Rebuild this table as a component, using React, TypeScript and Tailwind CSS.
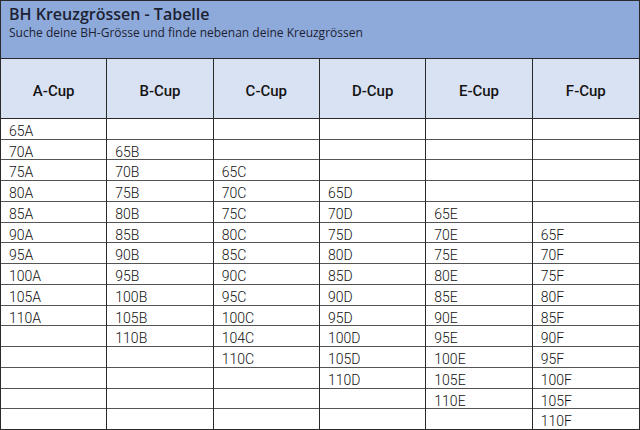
import React from "react";

const cols = ["A", "B", "C", "D", "E", "F"];
const sizes = [65, 70, 75, 80, 85, 90, 95, 100, 105, 110];

function cell(row: number, col: number): string {
  const idx = row - col;
  if (idx >= 0 && idx < sizes.length) {
    if (col === 2 && sizes[idx] === 105) return "104C";
    return `${sizes[idx]}${cols[col]}`;
  }
  return "";
}

export default function App() {
  const rows = Array.from({ length: 15 }, (_, i) => i);
  return (
    <div className="w-[640px] h-[430px] flex flex-col bg-white border border-[#2a2a2a] overflow-hidden">
      <div
        className="h-[58px] shrink-0 bg-[#8eaadb] px-2 pt-[2px] border-b border-[#2a2a2a] text-[#1c2233]"
        style={{ fontFamily: '"Open Sans", "Noto Sans", sans-serif' }}
      >
        <div className="text-[16px] font-semibold leading-[22px]">BH Kreuzgrössen - Tabelle</div>
        <div className="text-[12px] leading-[16px]">Suche deine BH-Grösse und finde nebenan deine Kreuzgrössen</div>
      </div>
      <div
        className="h-[60px] shrink-0 grid grid-cols-6 bg-[#d9e2f3] border-b border-[#2a2a2a] text-[#141414]"
        style={{ fontFamily: 'Roboto, "Noto Sans", sans-serif' }}
      >
        {cols.map((c, i) => (
          <div
            key={c}
            className={`flex items-center justify-center pt-[5px] text-[15px] font-medium ${i < 5 ? "border-r border-[#2a2a2a]" : ""}`}
          >
            {c}-Cup
          </div>
        ))}
      </div>
      <div className="flex-1 min-h-0 flex flex-col" style={{ fontFamily: 'Roboto, "Liberation Sans", sans-serif' }}>
        {rows.map((r) => (
          <div key={r} className={`flex-1 min-h-0 grid grid-cols-6 ${r < 14 ? "border-b border-[#555]" : ""}`}>
            {cols.map((_, c) => (
              <div
                key={c}
                className={`flex items-center pl-2 pt-[2px] text-[14px] font-light text-[#111] ${c < 5 ? "border-r border-[#2a2a2a]" : ""}`}
              >
                {cell(r, c)}
              </div>
            ))}
          </div>
        ))}
      </div>
    </div>
  );
}
